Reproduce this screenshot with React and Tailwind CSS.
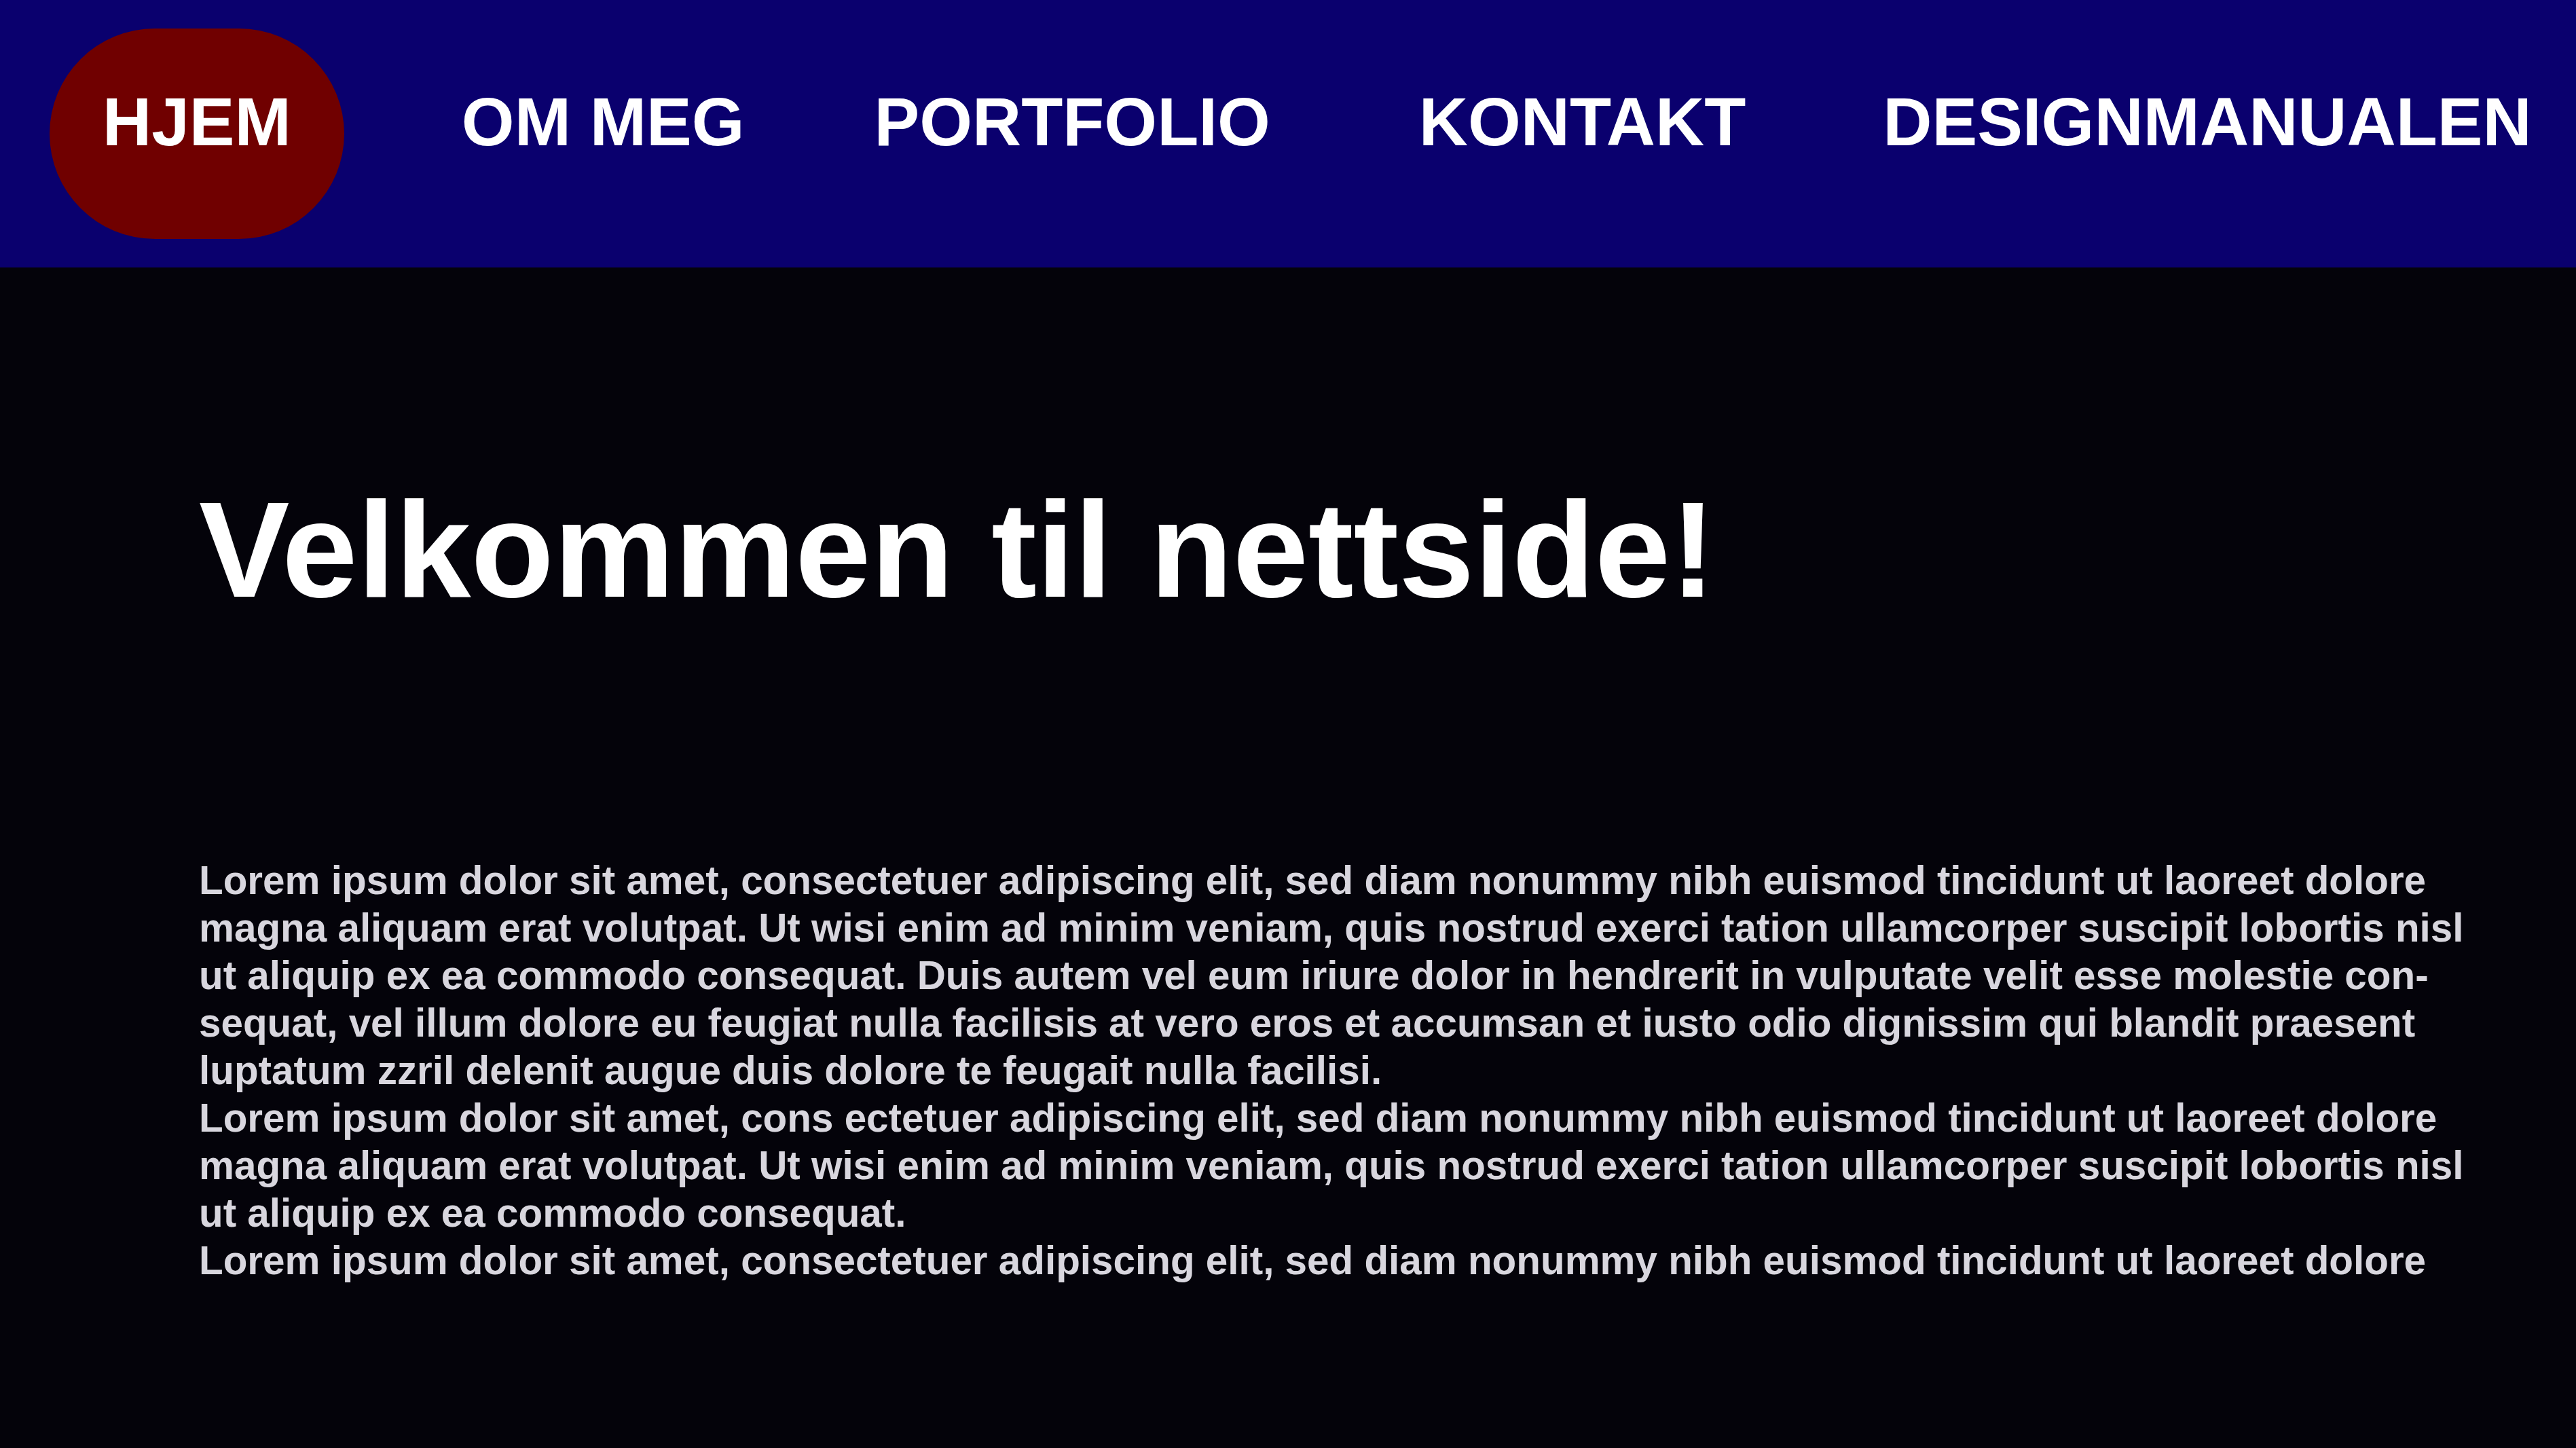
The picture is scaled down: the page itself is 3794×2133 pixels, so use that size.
export default function App() {
  const items = [
    { label: 'HJEM', active: true, ml: 'ml-0' },
    { label: 'OM MEG', ml: 'ml-[95px]' },
    { label: 'PORTFOLIO', ml: 'ml-[35px]' },
    { label: 'KONTAKT', ml: 'ml-[63px]' },
    { label: 'DESIGNMANUALEN', ml: 'ml-[46px]' },
  ];

  return (
    <div
      className="min-h-screen w-full overflow-hidden bg-[#04030a]"
      style={{ fontFamily: '"Liberation Sans", Arial, sans-serif' }}
    >
      {/* Top navigation */}
      <nav className="h-[394px] bg-[#0a006e] flex items-start pl-[73px]">
        {items.map((item) => (
          <a
            key={item.label}
            href="#"
            className={`${item.ml} shrink-0 whitespace-nowrap px-[78px] pt-[80px] pb-[116px] text-[100px] leading-[114px] font-bold text-white mt-[42px] ${
              item.active ? 'bg-[#700000] rounded-full' : ''
            }`}
          >
            {item.label}
          </a>
        ))}
      </nav>

      {/* Main content */}
      <main className="pl-[293px] pr-[134px]">
        <h1 className="mt-[302px] text-[200px] leading-[228px] font-bold text-white whitespace-nowrap">
          Velkommen til nettside!
        </h1>

        <div className="mt-[338px] text-[58.4px] leading-[70px] font-bold text-[#d8d6de] pb-[200px]">
          <p>
            Lorem ipsum dolor sit amet, consectetuer adipiscing elit, sed diam nonummy nibh euismod tincidunt ut laoreet dolore
            magna aliquam erat volutpat. Ut wisi enim ad minim veniam, quis nostrud exerci tation ullamcorper suscipit lobortis nisl
            ut aliquip ex ea commodo consequat. Duis autem vel eum iriure dolor in hendrerit in vulputate velit esse molestie con{'\u00AD'}sequat,
            vel illum dolore eu feugiat nulla facilisis at vero eros et accumsan et iusto odio dignissim qui blandit praesent
            luptatum zzril delenit augue duis dolore te feugait nulla facilisi.
          </p>
          <p>
            Lorem ipsum dolor sit amet, cons ectetuer adipiscing elit, sed diam nonummy nibh euismod tincidunt ut laoreet dolore
            magna aliquam erat volutpat. Ut wisi enim ad minim veniam, quis nostrud exerci tation ullamcorper suscipit lobortis nisl
            ut aliquip ex ea commodo consequat.
          </p>
          <p>
            Lorem ipsum dolor sit amet, consectetuer adipiscing elit, sed diam nonummy nibh euismod tincidunt ut laoreet dolore
          </p>
        </div>
      </main>
    </div>
  );
}
